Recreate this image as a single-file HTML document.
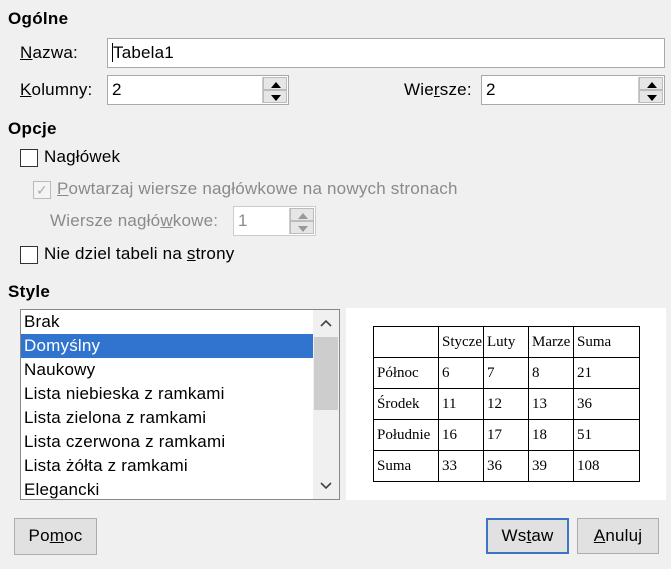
<!DOCTYPE html><html><head><meta charset="utf-8"><style>
*{box-sizing:border-box}
body{margin:0;width:671px;height:569px;background:#f0f0f0;font-family:"Liberation Sans","DejaVu Sans",sans-serif;font-size:17px;letter-spacing:0.2px;color:#000;position:relative;overflow:hidden}
.a{position:absolute;white-space:nowrap}
.h{font-weight:bold;font-size:17px;letter-spacing:0.3px}
.in{position:absolute;background:#fff;border:1px solid #a9a9a9;padding:0 0 0 4px;line-height:28px}
.sp{position:absolute;right:1px;top:1px;width:25px;bottom:1px;border-left:1px solid #ccc;background:#e8e8e8}
.sp div{height:50%;border:1px solid #bcbcbc;background:#e6e6e6;position:relative}
.sp div:after{content:"";position:absolute;left:7px;border-left:5px solid transparent;border-right:5px solid transparent}
.up:after{top:4px;border-bottom:6px solid #000}
.dn:after{top:4px;border-top:6px solid #000}
.dis .up:after{border-bottom-color:#999}.dis .dn:after{border-top-color:#999}
.cb{position:absolute;width:18px;height:18px;border:1px solid #333;background:#fff}
.btn{position:absolute;border:1px solid #adadad;background:#e1e1e1;text-align:center;line-height:34px}
u{text-decoration:underline}
.lb div{height:24px;line-height:24px;padding-left:3px}
table{border-collapse:collapse;font-family:"Liberation Serif",serif;font-size:15px;letter-spacing:0}
td{border:1px solid #000;height:31px;padding:0 0 0 3px;vertical-align:middle;white-space:nowrap;overflow:hidden}
</style></head><body>
<div class="a h" style="left:8px;top:9px">Ogólne</div>
<div class="a" style="left:20px;top:43px"><u>N</u>azwa:</div>
<div class="in" style="left:107px;top:38px;width:558px;height:30px"><span style="border-left:1px solid #000">Tabela1</span></div>
<div class="a" style="left:20px;top:80px"><u>K</u>olumny:</div>
<div class="in" style="left:107px;top:75px;width:182px;height:30px">2<div class="sp"><div class="up"></div><div class="dn"></div></div></div>
<div class="a" style="left:404px;top:80px">Wie<u>r</u>sze:</div>
<div class="in" style="left:481px;top:75px;width:184px;height:30px">2<div class="sp"><div class="up"></div><div class="dn"></div></div></div>
<div class="a h" style="left:8px;top:119px">Opcje</div>
<div class="cb" style="left:20px;top:149px"></div>
<div class="a" style="left:44px;top:147px">Na<u>g</u>łówek</div>
<div class="cb" style="left:33px;top:181px;border-color:#bbb;background:#f4f4f4;color:#aaa;font-size:14px;line-height:16px;text-align:center">✓</div>
<div class="a" style="left:57px;top:179px;color:#8a8a8a"><u>P</u>owtarzaj wiersze nagłówkowe na nowych stronach</div>
<div class="a" style="left:50px;top:211px;color:#8a8a8a">Wiersze nagłó<u>w</u>kowe:</div>
<div class="in dis" style="left:233px;top:206px;width:83px;height:30px;color:#8a8a8a;border-color:#ccc">1<div class="sp"><div class="up"></div><div class="dn"></div></div></div>
<div class="cb" style="left:20px;top:246px"></div>
<div class="a" style="left:44px;top:244px">Nie dziel tabeli na <u>s</u>trony</div>
<div class="a h" style="left:8px;top:282px">Style</div>
<div class="lb" style="position:absolute;left:20px;top:309px;width:320px;height:191px;background:#fff;border:1px solid #888;overflow:hidden">
<div style="margin-top:0px">Brak</div><div style="background:#3174d0;color:#fff;width:293px">Domyślny</div><div>Naukowy</div><div>Lista niebieska z ramkami</div><div>Lista zielona z ramkami</div><div>Lista czerwona z ramkami</div><div>Lista żółta z ramkami</div><div>Elegancki</div>
<div style="position:absolute;right:0;top:0;width:26px;height:189px;background:#f0f0f0;padding:0"></div>
<div style="position:absolute;right:1px;top:27px;width:24px;height:73px;background:#cdcdcd;padding:0"></div>
<svg style="position:absolute;right:7px;top:9px" width="12" height="8"><path d="M1 7 L6 2 L11 7" fill="none" stroke="#444" stroke-width="1.6"/></svg>
<svg style="position:absolute;right:7px;top:172px" width="12" height="8"><path d="M1 1 L6 6 L11 1" fill="none" stroke="#444" stroke-width="1.6"/></svg>
</div>
<div style="position:absolute;left:346px;top:308px;width:320px;height:192px;background:#fff"></div>
<table style="position:absolute;left:373px;top:326px">
<tr><td style="width:65px;max-width:65px"></td><td style="width:45px;max-width:45px">Stycze</td><td style="width:45px;max-width:45px">Luty</td><td style="width:45px;max-width:45px">Marze</td><td style="width:66px">Suma</td></tr>
<tr><td>Północ</td><td>6</td><td>7</td><td>8</td><td>21</td></tr>
<tr><td>Środek</td><td>11</td><td>12</td><td>13</td><td>36</td></tr>
<tr><td>Południe</td><td>16</td><td>17</td><td>18</td><td>51</td></tr>
<tr><td>Suma</td><td>33</td><td>36</td><td>39</td><td>108</td></tr>
</table>
<div class="btn" style="left:14px;top:518px;width:83px;height:37px">Po<u>m</u>oc</div>
<div class="btn" style="left:486px;top:518px;width:83px;height:36px;border:2px solid #3c76c2;line-height:32px">Ws<u>t</u>aw</div>
<div class="btn" style="left:577px;top:518px;width:82px;height:36px"><u>A</u>nuluj</div>
</body></html>
